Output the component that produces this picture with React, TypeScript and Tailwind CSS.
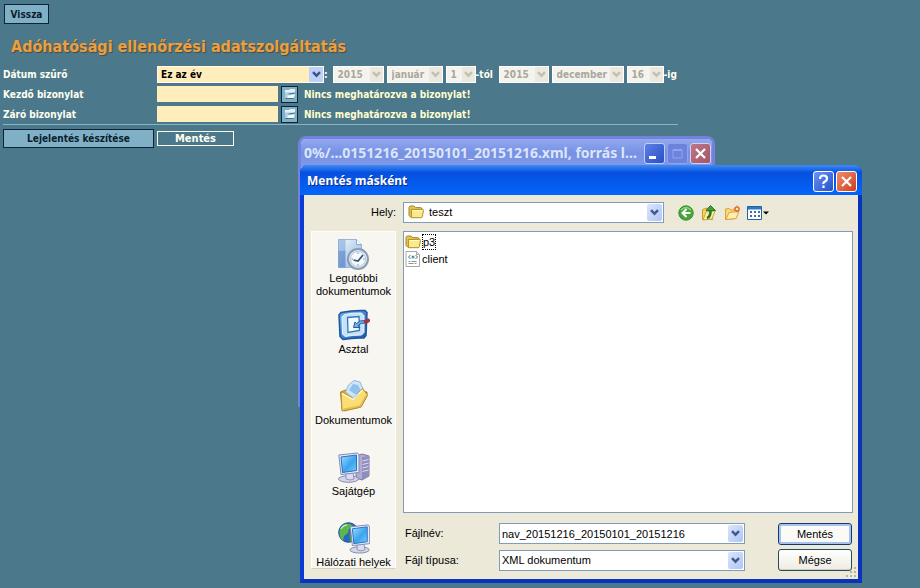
import type { ReactNode } from 'react';
import clsx from 'clsx';

const YEARS = ['2015', '2014', '2013'];

function Chevron({ className }: { className?: string }) {
  return (
    <svg viewBox="0 0 9 7" className={clsx('h-[7px] w-[9px]', className)} fill="none" stroke="currentColor">
      <path d="M1 1.2 4.5 4.7 8 1.2" strokeWidth="2.4" />
    </svg>
  );
}

function FolderIcon() {
  return (
    <svg viewBox="0 0 16 14" className="h-[14px] w-4">
      <path d="M1 2.5Q1 1 2.5 1h3.6l1.4 1.6h5q1.5 0 1.5 1.5V12H2.5L1 10.5z" fill="#e8c64c" stroke="#a8842a" />
      <path d="M3.4 4.4h11.2q.9 0 .9 1l-1.2 6.4q-.2.9-1.2.9H3.4z" fill="#fbe98e" stroke="#b08f30" />
      <path d="M4.4 5.5h10" stroke="#fff8c8" />
    </svg>
  );
}

function XmlFileIcon() {
  return (
    <svg viewBox="0 0 16 16" className="h-4 w-4" fill="none">
      <path d="M1 .5h10.5l3 3v12H1z" fill="#fff" stroke="#a3aaa8" />
      <path d="M11.500.5v3h3" fill="#dde5e4" stroke="#a3aaa8" />
      <path d="m5.500 4-2 2 2 2M10.500 4l2 2-2 2" stroke="#3f7a7c" />
      <circle cx="8" cy="6" r="1.500" fill="#4f90a8" />
      <path d="M3.500 10.500h2m1 0h5M3.500 12.500h5m1 0h2" stroke="#8a9694" />
    </svg>
  );
}

function OpenIcon() {
  return (
    <svg viewBox="0 0 14 14" className="h-[14px] w-[14px]">
      <path d="M2 3h4l1-1h5v5H2z" fill="#e3f0f6" />
      <path d="M2 5.500h10L11 11H2z" fill="#a9cfe0" />
      <path d="m4.500 8.500 7.500-1-1.500 3.500-6 .5z" fill="#f2fafc" />
      <path d="M2.500 11.500h8M5.500 7 12 6" stroke="#38677e" strokeWidth=".9" />
    </svg>
  );
}

function RecentIcon() {
  return (
    <svg viewBox="0 0 32 32" className="h-8 w-8">
      <defs>
        <linearGradient id="recent" x2="1" y2="1">
          <stop stopColor="#f4f9ff" />
          <stop offset="1" stopColor="#86aede" />
        </linearGradient>
      </defs>
      <path d="M.5 1.500h18l5 5v23H.5z" fill="url(#recent)" stroke="#9db6da" />
      <path d="M.5 12.500h7v17h-7z" fill="#3f76c0" opacity=".6" />
      <path d="M.5 1.500h7v11h-7z" fill="#7ba5da" opacity=".6" />
      <path d="M18.500 1.500v5h5" fill="#fff" stroke="#8ba8d2" />
      <circle cx="20" cy="21" r="10" fill="#dfeaf4" stroke="#8b9cb0" strokeWidth="2" />
      <circle cx="20" cy="21" r="7.500" fill="#f4f9fe" stroke="#b8cade" />
      <path d="M20 14.500V16m0 10v1.500M13.500 21H15m10 0h1.500" stroke="#7890aa" />
      <path d="m15.500 22 4.500 1 5-6" fill="none" stroke="#39516e" strokeWidth="1.700" />
    </svg>
  );
}

function DesktopIcon() {
  return (
    <svg viewBox="0 0 32 32" className="h-8 w-8">
      <defs>
        <linearGradient id="desk" x2="1" y2="1">
          <stop stopColor="#6db2ec" />
          <stop offset="1" stopColor="#1b56ac" />
        </linearGradient>
      </defs>
      <path d="M3 3.500Q15 1 27 1.500l2 2-1 23-2 2.500q-11-.5-21 1.500l-3-3L1 6z" fill="url(#desk)" stroke="#1b56a2" strokeWidth="1.500" />
      <path d="M6.500 5.500q9-2 17-1.500l2.500 2.500v17L23.500 26q-9 0-16.500 1.500L4.500 25 4 8z" fill="#c5e2f8" stroke="#eaf6ff" />
      <path d="m9.500 8.500 11.500-1 .5 14-11.500 2z" fill="#f3faff" stroke="#3475b8" strokeWidth="1.300" />
      <path d="m15.500 18.500 1.500-5.500 1.500 1.500q3.500-3.500 8-3l1 2.500q-4.500-.5-7.500 2.500l2 2z" fill="#70b1e6" stroke="#245da3" />
      <path d="m28 12.500 2-1" stroke="#ad3036" strokeWidth="4" strokeLinecap="round" />
    </svg>
  );
}

function DocumentsIcon() {
  return (
    <svg viewBox="0 0 32 32" className="h-8 w-8">
      <path d="m2.500 12 5-2 21.500 2v4l-6 11-17 4-2-2z" fill="#d7ac35" stroke="#aa8429" />
      <path d="m7.500 12 3-7L16 .5l6 1.500 4 9-7 10z" fill="#cfe5fa" stroke="#94b7d8" />
      <path d="m11 10 4-6 5 1 3 6-5 4z" fill="#8fc2ec" />
      <path d="m3 12 12 6.500 9.500-10 5 6.500L23 27 4 31z" fill="#fade74" stroke="#b58e30" />
      <path d="m4 13.500 11 6 9.500-9.500" fill="none" stroke="#fff5bf" strokeWidth="1.500" />
      <path d="m5 29.500 17-3.500 6-10.500" fill="none" stroke="#e5bd47" strokeWidth="1.500" />
      <path d="m14 16 4-2 3 .5-5 4z" fill="#bddcf3" />
    </svg>
  );
}

function Monitor({ id }: { id: string }) {
  return (
    <>
      <defs>
        <linearGradient id={id} x2="1" y2="1">
          <stop stopColor="#9de0ff" />
          <stop offset=".55" stopColor="#3ca3ee" />
          <stop offset="1" stopColor="#77cef8" />
        </linearGradient>
      </defs>
      <ellipse cx="10.500" cy="28" rx="10" ry="3.300" fill="#d3d5e8" stroke="#8589ad" />
      <path d="M8 21h7l1 7q-4 2-8 0z" fill="#dadded" stroke="#9295b6" />
      <path d="m.8 4 18.700-2 1.500 2v17.500L3 23.500z" fill="#e9edfa" stroke="#8089b5" />
      <path d="m3 6 15.500-2v15.500l-14 2z" fill={`url(#${id})`} stroke="#2970bd" />
    </>
  );
}

function ComputerIcon() {
  return (
    <svg viewBox="0 0 32 32" className="h-8 w-8">
      <path d="m18 5 6-2 7 2v20l-7 4-6-2z" fill="#afaed2" stroke="#7a79a8" />
      <path d="m24 6 7-1v20l-7 4z" fill="#8f8ebd" />
      <path d="m24.500 10 6-1.500m-6 5 6-1.500m-6 5 6-1.500m-6 5 6-1.500" stroke="#dedeef" />
      <Monitor id="computer-screen" />
    </svg>
  );
}

function NetworkIcon() {
  return (
    <svg viewBox="0 0 32 32" className="h-8 w-8">
      <circle cx="10.500" cy="10.500" r="9.800" fill="#2c65c9" stroke="#244e96" />
      <path d="M2 7q4-6 10-5l3 2-4 3-1 4-4 3-1 5Q0 14 2 7z" fill="#5cb849" />
      <path d="m11 12 5-1 3 4-3 4-4 1z" fill="#3e9c3a" />
      <path d="M3 7q2-4 6-4" fill="none" stroke="#bce9ab" strokeWidth="1.500" />
      <g transform="translate(11.500 1) scale(.96)">
        <Monitor id="network-screen" />
      </g>
    </svg>
  );
}

function BackIcon() {
  return (
    <svg viewBox="0 0 16 16" className="h-4 w-4">
      <circle cx="8" cy="8" r="7.200" fill="#43a838" stroke="#368a30" />
      <path d="M3 5q5-5 10 0" fill="none" stroke="#91d783" strokeWidth="1.500" />
      <path d="M12.500 8H5m3.500-4L4.500 8l4 4" fill="none" stroke="#fff" strokeWidth="2" />
    </svg>
  );
}

function UpIcon() {
  return (
    <svg viewBox="0 0 16 16" className="h-4 w-4">
      <path d="M1.500 4.500 6 3l1.500 1.500h4v10h-10z" fill="#f5d465" stroke="#ca992f" />
      <path d="m2 15 3-8 9-1-3 8z" fill="#fcefa2" stroke="#d2a33a" />
      <path d="M6 13q4-1 3.500-9" fill="none" stroke="#26782b" strokeWidth="2.600" />
      <path d="M5 5.500 9.500.5l5 5z" fill="#3ca33b" stroke="#26782b" />
    </svg>
  );
}

function NewFolderIcon() {
  return (
    <svg viewBox="0 0 16 16" className="h-4 w-4">
      <path d="m1.500 4 4-.5L7 5h5v8.500l-10.500 1z" fill="#f9da70" stroke="#dba339" />
      <path d="m2 14.500 3-7 10-1-3 7z" fill="#fff0b1" stroke="#dda43a" />
      <circle cx="13" cy="4" r="2" fill="#fff0b1" stroke="#e56a35" strokeWidth="1.500" />
      <path d="M13 .5v1m0 5v1M9.500 4h1m5 0h1" stroke="#e56a35" />
    </svg>
  );
}

function ViewIcon() {
  return (
    <svg viewBox="0 0 22 14" className="h-[14px] w-[22px]">
      <path d="M.5.5h14v13H.5z" fill="#fff" stroke="#25629f" />
      <path d="M1 1h13v2.500H1z" fill="#2a7ac4" />
      <path d="M3 6h2m2 0h2m2 0h2M3 10h2m2 0h2m2 0h2" stroke="#426fa1" strokeWidth="2" />
      <path d="M16 5.500h6l-3 3z" fill="#000" />
    </svg>
  );
}

function DateSelect({ label, width, options }: { label: string; width: string; options: string[] }) {
  return (
    <span className={clsx('relative block h-[17px] shrink-0', width)}>
      <select
        aria-label={label}
        disabled
        className="block h-full w-full appearance-none border border-white bg-[#f4f3ee] pl-1 text-[10px] leading-[15px] font-bold text-[#aaa79b] opacity-100"
      >
        {options.map((o) => (
          <option key={o}>{o}</option>
        ))}
      </select>
      <span className="pointer-events-none absolute inset-y-px right-px flex w-[13px] items-center justify-center bg-[#ebe9df] text-[#c3c0b0]">
        <Chevron />
      </span>
    </span>
  );
}

function VoucherRow({ id, label }: { id: string; label: string }) {
  return (
    <div className="flex h-5 items-center">
      <label htmlFor={id} className="w-[154px] shrink-0">
        {label}
      </label>
      <input id={id} className="h-4 w-[121px] bg-[#ffeebb] px-1 text-black" />
      <button aria-label={`${label} megnyitása`} className="ml-[3px] flex h-[17px] w-[17px] items-center justify-center border border-[#0c2338] bg-[#7fb0c6]">
        <OpenIcon />
      </button>
      <span className="ml-1.5 text-[#ffffcf]">Nincs meghatározva a bizonylat!</span>
    </div>
  );
}

function ReportForm() {
  return (
    <div className="px-[3px] pt-1 font-['DejaVu_Sans_Condensed','DejaVu_Sans',sans-serif] text-[10px] font-bold text-[#fffff0]">
      <button className="ml-px block h-5 w-[45px] border border-[#0c2338] bg-[#7fb0c6] font-bold text-[#0c1c2c]">Vissza</button>
      <h1 className="mt-3 mb-[6px] ml-2 text-[16px] leading-[22px] font-bold text-[#ec9f3f] [text-shadow:1px_1px_1px_#4b4b40]">
        Adóhatósági ellenőrzési adatszolgáltatás
      </h1>
      <div className="flex h-5 items-center">
        <label htmlFor="date-filter" className="w-[154px] shrink-0">
          Dátum szűrő
        </label>
        <span className="relative block h-[17px] w-[167px] shrink-0">
          <select
            id="date-filter"
            className="block h-full w-full appearance-none border border-[#fffbe8] bg-[#ffeebb] pl-[3px] text-[10px] leading-[15px] font-bold text-black"
          >
            <option>Ez az év</option>
            <option>Ez a hónap</option>
          </select>
          <span className="pointer-events-none absolute inset-y-px right-px flex w-[14px] items-center justify-center bg-[#bfd1fb] text-[#3d5485]">
            <Chevron />
          </span>
        </span>
        <span className="mr-[5px]">:</span>
        <div className="flex items-center gap-[3px]">
          <DateSelect label="Kezdő év" width="w-[51px]" options={YEARS} />
          <DateSelect label="Kezdő hónap" width="w-[56px]" options={['január', 'február']} />
          <DateSelect label="Kezdő nap" width="w-[30px]" options={['1', '2']} />
        </div>
        <span className="w-[23px]">-tól</span>
        <div className="flex items-center gap-[3px]">
          <DateSelect label="Záró év" width="w-[50px]" options={YEARS} />
          <DateSelect label="Záró hónap" width="w-[72px]" options={['december', 'november']} />
          <DateSelect label="Záró nap" width="w-[37px]" options={['16', '17']} />
        </div>
        <span>-ig</span>
      </div>
      <VoucherRow id="first-voucher" label="Kezdő bizonylat" />
      <VoucherRow id="last-voucher" label="Záró bizonylat" />
      <hr className="w-[675px] border-[#86b4c5]" />
      <div className="mt-1 flex items-center gap-[3px]">
        <button className="h-[19px] w-[151px] border border-[#0c2338] bg-[#7fb0c6] font-bold text-[#0c1c2c]">Lejelentés készítése</button>
        <button className="h-[15px] w-[77px] border border-[#fffff0] text-[11px] leading-[13px] font-bold">Mentés</button>
      </div>
    </div>
  );
}

function CaptionButton({ label, className, children }: { label: string; className: string; children: ReactNode }) {
  return (
    <button aria-label={label} className={clsx('flex h-[21px] w-[21px] shrink-0 items-center justify-center rounded-[3px] border', className)}>
      <svg viewBox="0 0 19 19" className="h-[19px] w-[19px]" fill="none" stroke="currentColor">
        {children}
      </svg>
    </button>
  );
}

function ProgressWindow() {
  return (
    <section className="absolute top-[136px] left-[298px] h-[271px] w-[417px] rounded-t-lg border-3 border-[#7383dc] bg-[#ece9d8]">
      <header className="flex h-7 items-center gap-0.5 rounded-t-[5px] bg-linear-to-b from-[#93a9f0] via-[#7691e3] to-[#8298e6] pr-px pl-[3px]">
        <h2 className="flex-1 font-['Noto_Sans',sans-serif] text-[14px] leading-5 font-bold whitespace-nowrap text-[#dce5fc]">
          0%/...0151216_20150101_20151216.xml, forrás l...
        </h2>
        <CaptionButton label="Kis méret" className="border-[#c0cff8] bg-linear-to-br from-[#5d80e3] to-[#2b4dc5] text-white">
          <path d="M4 13.500h7" strokeWidth="3" />
        </CaptionButton>
        <CaptionButton label="Teljes méret" className="border-[#8da5ed] bg-[#6c82dd] text-[#91a5ec]">
          <path d="M5 5.500h9v8.500H5zM5 6.500h9" />
        </CaptionButton>
        <CaptionButton label="Bezárás" className="border-[#d4cfee] bg-linear-to-br from-[#bd7686] to-[#a65567] text-white">
          <path d="m5 5 9 9m0-9-9 9" strokeWidth="2.200" />
        </CaptionButton>
      </header>
    </section>
  );
}

function ComboArrow() {
  return (
    <span className="pointer-events-none absolute inset-y-0.5 right-0.5 flex w-[15px] items-center justify-center rounded-xs bg-linear-to-br from-[#dbe5fe] to-[#afc5f7] text-[#445a86]">
      <Chevron />
    </span>
  );
}

const places = [
  { name: 'Legutóbbi dokumentumok', icon: <RecentIcon /> },
  { name: 'Asztal', icon: <DesktopIcon /> },
  { name: 'Dokumentumok', icon: <DocumentsIcon /> },
  { name: 'Sajátgép', icon: <ComputerIcon /> },
  { name: 'Hálózati helyek', icon: <NetworkIcon /> },
];

function SaveDialog() {
  return (
    <section
      role="dialog"
      aria-labelledby="save-title"
      className="absolute top-[165px] left-[300px] w-[562px] rounded-t-lg border-x-4 border-b-4 border-[#0a3bd2] border-r-[#0a33bd] border-b-[#0a33bd] bg-[#ece9d8] font-['Liberation_Sans',Arial,sans-serif] text-[11px] text-black"
    >
      <header className="-mx-1 flex h-[30px] items-center gap-0.5 rounded-t-[7px] bg-linear-to-b from-[#3d8bf5] via-[#0650df] via-25% to-[#0465fb] pt-0.5 pr-[5px] pl-[7px]">
        <h2 id="save-title" className="flex-1 font-['Noto_Sans',sans-serif] text-[12px] font-bold text-white [text-shadow:1px_1px_0_#0a2a8c]">
          Mentés másként
        </h2>
        <CaptionButton label="Súgó" className="border-white bg-linear-to-br from-[#6c93f2] to-[#2150cf] text-white">
          <path d="M6 7q0-3.500 3.500-3.500T13 6.500q0 2-2 3T9.500 12M9.500 13.500v2.500" strokeWidth="2.200" />
        </CaptionButton>
        <CaptionButton label="Bezárás" className="border-white bg-linear-to-br from-[#ef8b6c] to-[#cf3c17] text-white">
          <path d="m5 5 9 9m0-9-9 9" strokeWidth="2.200" />
        </CaptionButton>
      </header>

      <div className="px-[7px] pt-[7px] pb-2">
        {/* Location bar */}
        <div className="flex h-[21px] items-center">
          <label htmlFor="folder" className="w-[85px] text-right">
            Hely:
          </label>
          <span className="relative ml-[7px] block h-[21px] w-[261px]">
            <select id="folder" className="block h-full w-full appearance-none border border-[#7f9db9] bg-white pl-[25px] leading-[19px]">
              <option>teszt</option>
            </select>
            <span className="pointer-events-none absolute top-[3px] left-[5px]">
              <FolderIcon />
            </span>
            <ComboArrow />
          </span>
          <div className="ml-[14px] flex items-center gap-[7px]">
            <button aria-label="Vissza"><BackIcon /></button>
            <button aria-label="Fel egy szinttel"><UpIcon /></button>
            <button aria-label="Új mappa"><NewFolderIcon /></button>
            <button aria-label="Nézet"><ViewIcon /></button>
          </div>
        </div>

        <div className="mt-2 flex gap-[7px]">
          {/* Places */}
          <nav className="flex h-[338px] w-[85px] shrink-0 flex-col border border-[#fffefa] border-b-[#d3cfbd] bg-[#f8f6f0] pt-[6px]">
            {places.map((p) => (
              <button key={p.name} className="flex h-[71px] shrink-0 flex-col items-center gap-0.5 text-center leading-[13px] last:h-12">
                {p.icon}
                <span>{p.name}</span>
              </button>
            ))}
          </nav>

          <div className="-mr-[2px] min-w-0 flex-1">
            <ul className="h-[282px] border border-[#7f9db9] bg-white px-px pt-px">
              <li className="flex h-[17px] items-center gap-px">
                <FolderIcon />
                <span className="border border-dotted border-black leading-[14px]">p3</span>
              </li>
              <li className="flex h-[17px] items-center gap-px">
                <XmlFileIcon />
                <span className="leading-[14px]">client</span>
              </li>
            </ul>

            <div className="mt-[10px] flex justify-between pr-px">
              <div className="grid grid-cols-[94px_246px] items-center gap-y-[6px] pl-0.5">
                <label htmlFor="file-name">Fájlnév:</label>
                <span className="relative block h-[21px]">
                  <input
                    id="file-name"
                    defaultValue="nav_20151216_20150101_20151216"
                    className="block h-full w-full border border-[#7f9db9] bg-white pr-5 pl-0.5"
                  />
                  <ComboArrow />
                </span>
                <label htmlFor="file-type">Fájl típusa:</label>
                <span className="relative block h-[21px]">
                  <select id="file-type" className="block h-full w-full appearance-none border border-[#7f9db9] bg-white pl-0.5 leading-[19px]">
                    <option>XML dokumentum</option>
                  </select>
                  <ComboArrow />
                </span>
              </div>
              <div className="flex flex-col gap-1">
                <button className="h-[22px] w-[74px] rounded-[3px] border border-[#123a6c] bg-[#fbfaf6] shadow-[inset_0_0_0_2px_#a9c1ee]">
                  Mentés
                </button>
                <button className="h-[22px] w-[74px] rounded-[3px] border border-[#254b5c] bg-linear-to-b from-white to-[#eeece2] shadow-[inset_0_-1px_0_#d3cec0]">
                  Mégse
                </button>
              </div>
            </div>
          </div>
        </div>
      </div>
      <svg viewBox="0 0 12 12" className="absolute right-px bottom-px h-3 w-3" fill="#b8b4a2">
        <path d="M9 1h2v2H9zM5 5h2v2H5zm4 0h2v2H9zM1 9h2v2H1zm4 0h2v2H5zm4 0h2v2H9z" />
      </svg>
    </section>
  );
}

export default function App() {
  return (
    <main className="relative min-h-screen overflow-hidden bg-[#4c788c]">
      <ReportForm />
      <ProgressWindow />
      <SaveDialog />
    </main>
  );
}
